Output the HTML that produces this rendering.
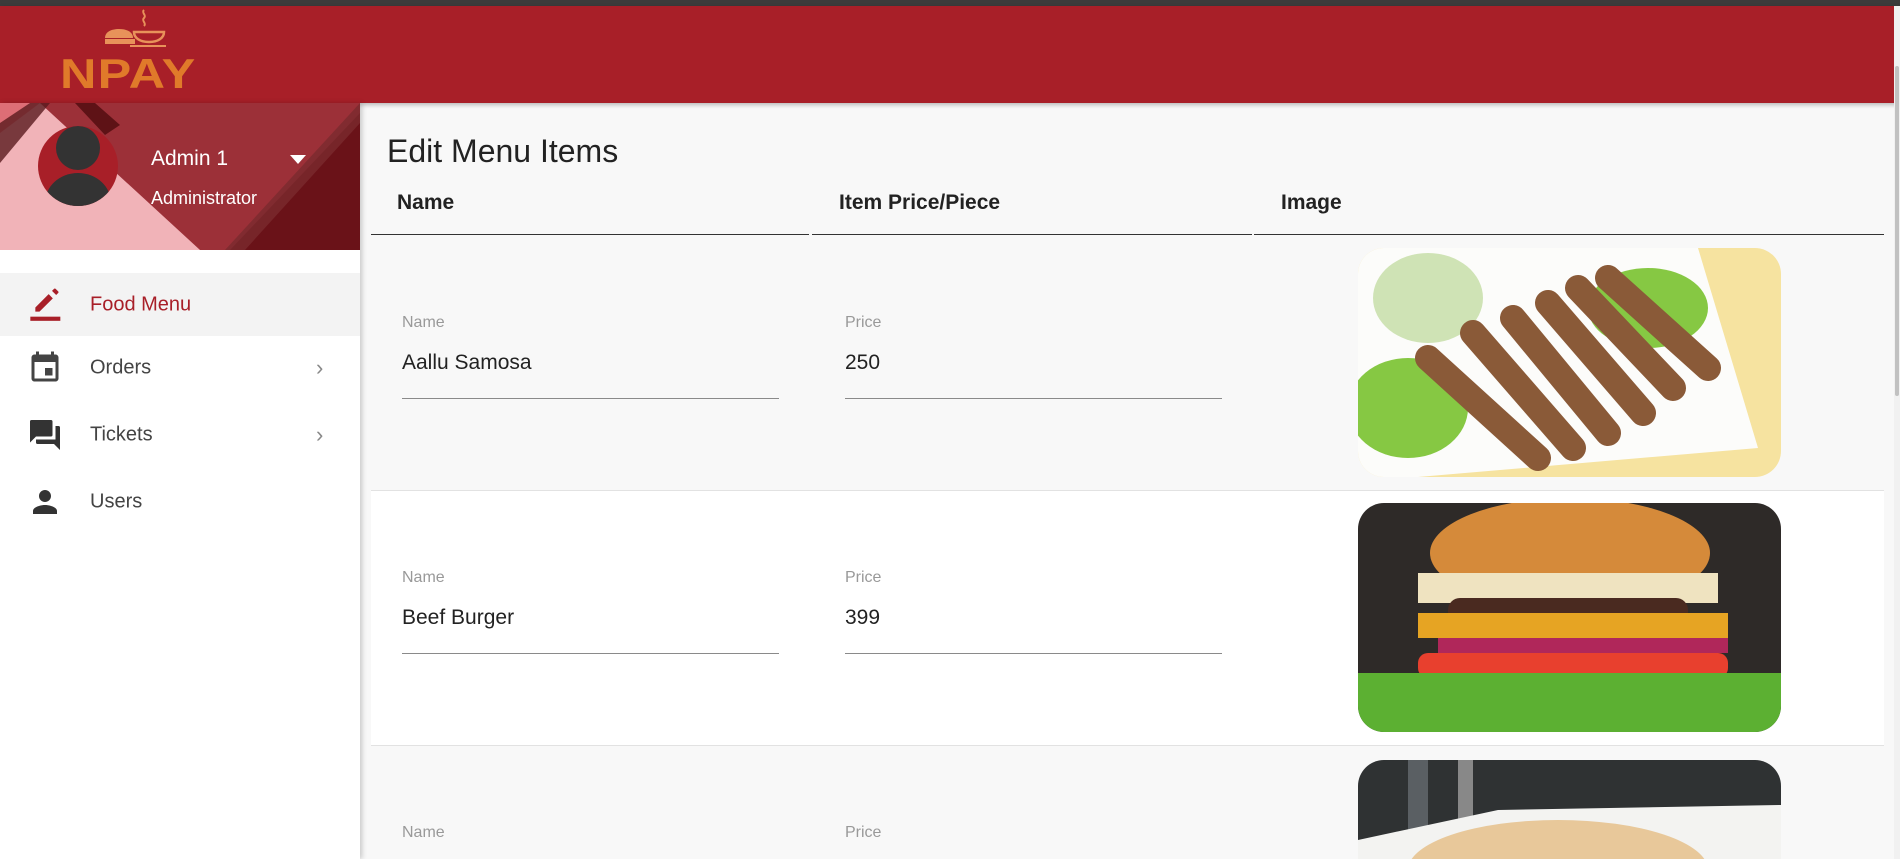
<!DOCTYPE html>
<html><head><meta charset="utf-8"><style>
*{margin:0;padding:0;box-sizing:border-box}
html{width:1900px;height:859px;overflow:hidden}
body{width:1900px;height:859px;overflow:hidden;background:#f8f8f8;font-family:"Liberation Sans",Arial,sans-serif;position:relative}
.top{position:absolute;left:0;top:0;width:1900px;height:6px;background:#3b3b3b}
.hdr{position:absolute;left:0;top:6px;width:1900px;height:97px;background:#a81f28;box-shadow:0 2px 4px rgba(0,0,0,.25)}
.logo{position:absolute;left:60px;top:44px;font:900 42px "Liberation Sans",sans-serif;color:#e07a2a;letter-spacing:1px;transform:scaleX(1.2);transform-origin:left}
.side{position:absolute;left:0;top:103px;width:360px;height:756px;background:#fff;box-shadow:2px 0 5px rgba(0,0,0,.2)}
.prof{position:absolute;left:0;top:0;width:360px;height:147px;overflow:hidden}
.nav{position:absolute;left:0;width:360px;height:63px;font-size:20px;color:#444}
.nav span{position:absolute;left:90px;top:50%;transform:translateY(-50%)}
.nav svg{position:absolute;left:27px;top:50%;transform:translateY(-50%)}
.chev{position:absolute;left:316px;top:50%;transform:translateY(-50%);color:#888;font-size:22px;font-weight:400}
.main{position:absolute;left:371px;top:103px;width:1513px;height:756px;overflow:hidden}
h1{position:absolute;left:16px;top:30px;font-weight:400;font-size:32px;color:#222}
.th{position:absolute;top:88px;font-weight:700;font-size:21px;color:#222}
.hl{position:absolute;top:131px;height:1px;background:#333}
.row{position:absolute;left:0;width:1513px;height:255px;border-bottom:1px solid #e2e2e2}
.lbl{position:absolute;font-size:16px;color:#999}
.val{position:absolute;font-size:21px;color:#222}
.ul{position:absolute;height:1px;background:#8a8a8a;width:377px}
.img{position:absolute;left:987px;width:423px;height:229px;border-radius:26px;overflow:hidden}
.sb{position:absolute;right:0;top:6px;width:6px;height:853px;background:#f1f1f1}
.sb i{position:absolute;left:1px;top:60px;width:4px;height:330px;background:#c1c1c1;border-radius:2px}
</style></head><body>
<div class="top"></div>
<div class="hdr">
<svg style="position:absolute;left:100px;top:2px" width="70" height="40" viewBox="0 0 70 40"><path d="M44 2c-3 3 3 5 0 8s3 5 0 8" stroke="#e8925a" stroke-width="2" fill="none"/><path d="M34 24h30c0 6-6 10-15 10s-15-4-15-10z" fill="none" stroke="#e8925a" stroke-width="2.5"/><path d="M5 30c0-6 6-9 14-9s14 3 14 9z" fill="#e8925a"/><rect x="5" y="31" width="30" height="5" fill="#e8925a"/><path d="M30 38h36" stroke="#e8925a" stroke-width="2"/></svg>
<div class="logo">NPAY</div>
</div>
<div class="side">
<div class="prof"><svg width="360" height="147" viewBox="0 0 360 147">
<rect width="360" height="147" fill="#9c3038"/>
<polygon points="0,0 40,0 200,147 0,147" fill="#f1b3b8"/>
<polygon points="0,0 40,0 0,30" fill="#dd6e76"/>
<polygon points="0,20 30,0 50,0 0,60" fill="#5a1a1e" opacity=".8"/>
<polygon points="75,0 95,0 120,22 105,32" fill="#5e1216"/>
<polygon points="360,10 360,147 230,147" fill="#6a1218"/>
<polygon points="360,0 360,20 245,147 225,147" fill="#7a2a2e" opacity=".8"/>
<circle cx="78" cy="63" r="40" fill="#a81f28"/>
<clipPath id="c"><circle cx="78" cy="63" r="40"/></clipPath>
<g clip-path="url(#c)" fill="#333"><circle cx="78" cy="45" r="22"/><ellipse cx="78" cy="100" rx="33" ry="30"/></g>
<text x="151" y="62" font-family="Liberation Sans" font-size="21" fill="#fff">Admin 1</text>
<text x="151" y="101" font-family="Liberation Sans" font-size="18" fill="#fff">Administrator</text>
<polygon points="290,52 306,52 298,61" fill="#fff"/>
</svg></div>
<div class="nav" style="top:170px;background:#f3f3f3;color:#a81f28"><svg width="40" height="40" viewBox="0 0 24 24"><path d="M4 15.5V18h2.5l8-8-2.5-2.5-8 8zM17.7 6.8c.3-.3.3-.7 0-1l-1.5-1.5c-.3-.3-.7-.3-1 0l-1.2 1.2 2.5 2.5 1.2-1.2z" fill="#a81f28" transform="translate(1,-2)"/><rect x="2" y="19" width="18" height="2.5" fill="#a81f28"/></svg><span>Food Menu</span></div>
<div class="nav" style="top:233px"><svg width="36" height="36" viewBox="0 0 24 24"><path fill="#444" d="M17 12h-5v5h5v-5zM16 1v2H8V1H6v2H5c-1.1 0-2 .9-2 2v14c0 1.1.9 2 2 2h14c1.1 0 2-.9 2-2V5c0-1.1-.9-2-2-2h-1V1h-2zm3 18H5V8h14v11z"/></svg><span>Orders</span><b class="chev">›</b></div>
<div class="nav" style="top:300px"><svg width="36" height="36" viewBox="0 0 24 24"><path fill="#333" d="M21 6h-2v9H6v2c0 .6.4 1 1 1h11l4 4V7c0-.6-.4-1-1-1zm-4 6V3c0-.6-.4-1-1-1H3c-.6 0-1 .4-1 1v14l4-4h10c.6 0 1-.4 1-1z"/></svg><span>Tickets</span><b class="chev">›</b></div>
<div class="nav" style="top:367px"><svg width="36" height="36" viewBox="0 0 24 24"><path fill="#333" d="M12 12c2.2 0 4-1.8 4-4s-1.8-4-4-4-4 1.8-4 4 1.8 4 4 4zm0 2c-2.7 0-8 1.3-8 4v2h16v-2c0-2.7-5.3-4-8-4z"/></svg><span>Users</span></div>
</div>
<div class="main">
<h1>Edit Menu Items</h1>
<div class="th" style="left:26px">Name</div>
<div class="th" style="left:468px">Item Price/Piece</div>
<div class="th" style="left:910px">Image</div>
<div class="hl" style="left:0;width:438px"></div>
<div class="hl" style="left:441px;width:440px"></div>
<div class="hl" style="left:883px;width:630px"></div>

<div class="row" style="top:133px;background:#f8f8f8">
<div class="lbl" style="left:31px;top:78px">Name</div><div class="val" style="left:31px;top:115px">Aallu Samosa</div><div class="ul" style="left:31px;top:162px"></div>
<div class="lbl" style="left:474px;top:78px">Price</div><div class="val" style="left:474px;top:115px">250</div><div class="ul" style="left:474px;top:162px"></div>
<div class="img" style="top:12px;background:#fff">
<svg width="423" height="229" viewBox="0 0 423 229"><rect width="423" height="229" fill="#f6e3a0"/><polygon points="0,0 340,0 400,200 60,229 0,229" fill="#fcfcfa"/><ellipse cx="50" cy="160" rx="60" ry="50" fill="#86c843"/><ellipse cx="290" cy="60" rx="60" ry="40" fill="#86c843"/><ellipse cx="70" cy="50" rx="55" ry="45" fill="#cfe3b5"/>
<g stroke="#8a5a38" stroke-width="26" stroke-linecap="round"><line x1="70" y1="110" x2="180" y2="210"/><line x1="115" y1="85" x2="215" y2="200"/><line x1="155" y1="70" x2="250" y2="185"/><line x1="190" y1="55" x2="285" y2="165"/><line x1="220" y1="40" x2="315" y2="140"/><line x1="250" y1="30" x2="350" y2="120"/></g></svg></div>
</div>

<div class="row" style="top:388px;background:#fff">
<div class="lbl" style="left:31px;top:78px">Name</div><div class="val" style="left:31px;top:115px">Beef Burger</div><div class="ul" style="left:31px;top:162px"></div>
<div class="lbl" style="left:474px;top:78px">Price</div><div class="val" style="left:474px;top:115px">399</div><div class="ul" style="left:474px;top:162px"></div>
<div class="img" style="top:12px;background:#2e2a28">
<svg width="423" height="229" viewBox="0 0 423 229"><ellipse cx="212" cy="50" rx="140" ry="55" fill="#d58a3a"/><rect x="60" y="70" width="300" height="30" fill="#efe3c0"/><rect x="90" y="95" width="240" height="30" rx="12" fill="#4a2a20"/><rect x="60" y="110" width="310" height="25" fill="#e6a423"/><rect x="80" y="135" width="290" height="15" fill="#b0275a"/><rect x="60" y="150" width="310" height="25" rx="10" fill="#e8402e"/><rect x="0" y="170" width="423" height="60" fill="#5cb032"/></svg></div>
</div>

<div class="row" style="top:643px;background:#f8f8f8;border:none;height:113px;overflow:hidden">
<div class="lbl" style="left:31px;top:78px">Name</div>
<div class="lbl" style="left:474px;top:78px">Price</div>
<div class="img" style="top:14px;background:#2f3233">
<svg width="423" height="229" viewBox="0 0 423 229"><rect x="50" y="0" width="20" height="80" fill="#5a5f63"/><rect x="100" y="0" width="15" height="70" fill="#888"/><polygon points="0,80 140,50 423,45 423,229 0,229" fill="#f3f3f1"/><ellipse cx="200" cy="110" rx="150" ry="50" fill="#e8c89a"/></svg></div>
</div>
</div>
<div class="sb"><i></i></div>
</body></html>
